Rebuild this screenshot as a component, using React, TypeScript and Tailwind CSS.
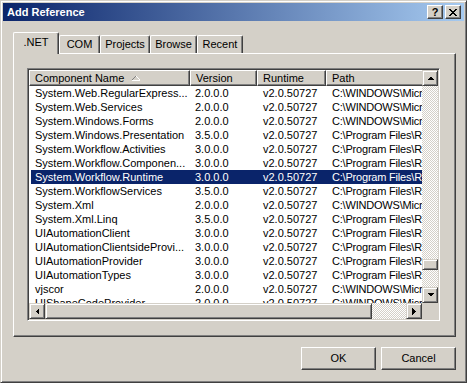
const raised =
  "border border-t-white border-l-white border-r-[#404040] border-b-[#404040] shadow-[inset_-1px_-1px_#808080] bg-[#d4d0c8]";
const scrollBtn =
  "border border-t-[#d4d0c8] border-l-[#d4d0c8] border-r-[#404040] border-b-[#404040] shadow-[inset_1px_1px_#ffffff,inset_-1px_-1px_#808080] bg-[#d4d0c8]";
const dither =
  "bg-[repeating-conic-gradient(#ffffff_0_25%,#d4d0c8_0_50%)] bg-[length:2px_2px]";

const WIN = "C:\\WINDOWS\\Micr";
const PF = "C:\\Program Files\\R";

const rows = [
  ["System.Web.RegularExpress...", "2.0.0.0", WIN],
  ["System.Web.Services", "2.0.0.0", WIN],
  ["System.Windows.Forms", "2.0.0.0", WIN],
  ["System.Windows.Presentation", "3.5.0.0", PF],
  ["System.Workflow.Activities", "3.0.0.0", PF],
  ["System.Workflow.Componen...", "3.0.0.0", PF],
  ["System.Workflow.Runtime", "3.0.0.0", PF],
  ["System.WorkflowServices", "3.5.0.0", PF],
  ["System.Xml", "2.0.0.0", WIN],
  ["System.Xml.Linq", "3.5.0.0", PF],
  ["UIAutomationClient", "3.0.0.0", PF],
  ["UIAutomationClientsideProvi...", "3.0.0.0", PF],
  ["UIAutomationProvider", "3.0.0.0", PF],
  ["UIAutomationTypes", "3.0.0.0", PF],
  ["vjscor", "2.0.0.0", WIN],
  ["UIShapeCodeProvider", "2.0.0.0", WIN],
];

function Arrow({ dir }: { dir: "up" | "down" | "left" | "right" }) {
  const pts = {
    up: "0,4 7,4 3.5,0.5",
    down: "0,0 7,0 3.5,3.5",
    left: "4,0 4,7 0.5,3.5",
    right: "0,0 0,7 3.5,3.5",
  }[dir];
  const horiz = dir === "up" || dir === "down";
  return (
    <svg width={horiz ? 7 : 4} height={horiz ? 4 : 7} shapeRendering="crispEdges">
      <polygon points={pts} fill="#000" />
    </svg>
  );
}

function Tab({ label, w, active }: { label: string; w: string; active?: boolean }) {
  return (
    <div
      className={`${w} ${
        active ? "h-[22px] relative z-10 pb-[3px]" : "h-[18px] mb-[1px]"
      } flex items-center justify-center bg-[#d4d0c8] border-t border-l border-r border-t-white border-l-white border-r-[#404040] shadow-[inset_-1px_0_#808080] rounded-t-[2px]`}
    >
      {label}
    </div>
  );
}

export default function App() {
  return (
    <div className="w-[467px] h-[383px] flex flex-col bg-[#d4d0c8] border border-t-[#d4d0c8] border-l-[#d4d0c8] border-r-[#404040] border-b-[#404040] shadow-[inset_1px_1px_#ffffff,inset_-1px_-1px_#808080] p-[2px] font-['Liberation_Sans',Arial,sans-serif] text-[11px] text-black leading-none select-none">
      {/* title bar */}
      <div className="h-[18px] flex items-center bg-[linear-gradient(to_right,#0a246a,#a6caf0)] pl-[4px] pr-[3px]">
        <span className="font-bold text-white text-[11px]">Add Reference</span>
        <div className="ml-auto flex gap-[2px]">
          <div className={`${raised} w-[16px] h-[14px] flex items-center justify-center font-bold text-[11px] pt-[1px]`}>
            ?
          </div>
          <div className={`${raised} w-[16px] h-[14px] flex items-center justify-center`}>
            <svg width="8" height="7" shapeRendering="crispEdges">
              <path
                d="M0 0h2v1h-2zM6 0h2v1h-2zM1 1h2v1h-2zM5 1h2v1h-2zM2 2h4v1h-4zM3 3h2v1h-2zM2 4h4v1h-4zM1 5h2v1h-2zM5 5h2v1h-2zM0 6h2v1h-2zM6 6h2v1h-2z"
                fill="#000"
              />
            </svg>
          </div>
        </div>
      </div>

      <div className="flex flex-col pl-[10px] pr-[8px] pt-[11px]">
        {/* tabs */}
        <div className="flex items-end h-[22px] -mb-px">
          <Tab label=".NET" w="w-[46px]" active />
          <Tab label="COM" w="w-[41px]" />
          <Tab label="Projects" w="w-[50px]" />
          <Tab label="Browse" w="w-[47px]" />
          <Tab label="Recent" w="w-[46px]" />
        </div>

        {/* panel */}
        <div className="h-[284px] border border-t-white border-l-white border-r-[#404040] border-b-[#404040] shadow-[inset_-1px_-1px_#808080] pl-[13px] pt-[14px]">
          <div className="w-[413px] h-[253px] border border-t-[#808080] border-l-[#808080] border-r-white border-b-white shadow-[inset_1px_1px_#404040,inset_-1px_-1px_#d4d0c8] p-px flex">
            {/* left: header, rows, h-scroll */}
            <div className="w-[393px] flex flex-col">
              <div className="h-[16px] flex overflow-hidden">
                <div className={`${raised} w-[161px] shrink-0 flex items-center pl-[5px]`}>
                  Component Name
                  <svg width="8" height="5" className="ml-[8px] mt-[1px]" shapeRendering="crispEdges">
                    <path d="M0 4L4 0" stroke="#808080" />
                    <path d="M4 0L8 4M0 4.5H8" stroke="#ffffff" />
                  </svg>
                </div>
                <div className={`${raised} w-[67px] shrink-0 flex items-center pl-[5px]`}>Version</div>
                <div className={`${raised} w-[69px] shrink-0 flex items-center pl-[5px]`}>Runtime</div>
                <div className={`${raised} w-[140px] shrink-0 flex items-center pl-[5px]`}>Path</div>
              </div>
              <div className="h-[217px] bg-white overflow-hidden">
                {rows.map(([name, ver, path]) => {
                  const sel = name === "System.Workflow.Runtime";
                  return (
                    <div
                      key={name}
                      className={`h-[14px] ml-[2px] flex items-center whitespace-nowrap ${
                        sel ? "bg-[#0a246a] text-white" : ""
                      }`}
                    >
                      <div className="w-[159px] shrink-0 pl-[4px]">{name}</div>
                      <div className="w-[67px] shrink-0 pl-[5px]">{ver}</div>
                      <div className="w-[69px] shrink-0 pl-[6px]">v2.0.50727</div>
                      <div className="shrink-0 pl-[6px] tracking-[-0.2px]">{path}</div>
                    </div>
                  );
                })}
              </div>
              <div className="h-[16px] flex">
                <div className={`${scrollBtn} w-[16px] flex items-center justify-center`}>
                  <Arrow dir="left" />
                </div>
                <div className={`${scrollBtn} w-[327px]`} />
                <div className={`flex-1 ${dither}`} />
                <div className={`${scrollBtn} w-[16px] flex items-center justify-center`}>
                  <Arrow dir="right" />
                </div>
              </div>
            </div>

            {/* right: v-scroll + corner */}
            <div className="w-[16px] flex flex-col">
              <div className={`${scrollBtn} h-[16px] flex items-center justify-center`}>
                <Arrow dir="up" />
              </div>
              <div className={`h-[201px] ${dither}`}>
                <div className={`${scrollBtn} h-[11px] mt-[173px]`} />
              </div>
              <div className={`${scrollBtn} h-[16px] flex items-center justify-center`}>
                <Arrow dir="down" />
              </div>
              <div className="h-[16px] bg-[#d4d0c8]" />
            </div>
          </div>
        </div>

        {/* buttons */}
        <div className="flex justify-end gap-[5px] mt-[10px]">
          <div className={`${raised} w-[75px] h-[23px] flex items-center justify-center`}>OK</div>
          <div className={`${raised} w-[75px] h-[23px] flex items-center justify-center`}>Cancel</div>
        </div>
      </div>
    </div>
  );
}
